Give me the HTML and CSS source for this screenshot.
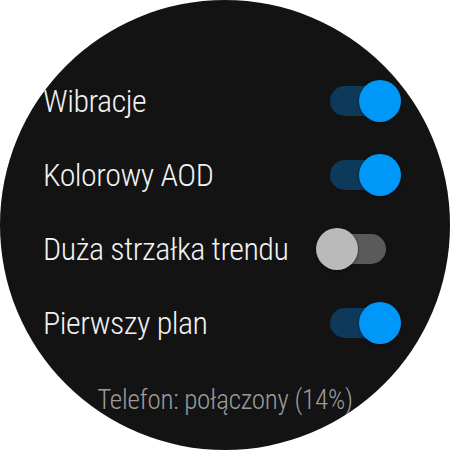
FILE: index.html
```html
<!DOCTYPE html>
<html>
<head>
<meta charset="utf-8">
<link rel="stylesheet" href="styles.css">
</head>
<body>
<div class="watch">
  <div class="list">
    <div class="row"><span class="label">Wibracje</span><span class="switch on"><span class="track"></span><span class="thumb"></span></span></div>
    <div class="row"><span class="label">Kolorowy AOD</span><span class="switch on"><span class="track"></span><span class="thumb"></span></span></div>
    <div class="row"><span class="label">Duża strzałka trendu</span><span class="switch off"><span class="track"></span><span class="thumb"></span></span></div>
    <div class="row"><span class="label">Pierwszy plan</span><span class="switch on"><span class="track"></span><span class="thumb"></span></span></div>
  </div>
  <div class="status">Telefon: połączony (14%)</div>
</div>
</body>
</html>
```
FILE: styles.css
```css
html, body { margin: 0; padding: 0; background: #ffffff; }
.watch {
  width: 450px; height: 450px; border-radius: 50%;
  background: #131313; overflow: hidden;
  display: flex; flex-direction: column;
  font-family: Roboto, "Noto Sans", sans-serif; font-weight: 300;
  font-stretch: 80%;
}
.list { padding-top: 64px; display: flex; flex-direction: column; }
.row {
  height: 74px; display: flex; align-items: center; justify-content: space-between;
  padding: 0 49px 0 43px;
}
.label { color: #f2f2f2; font-size: 32px; letter-spacing: -0.5px; }
.switch { position: relative; width: 85px; height: 42px; display: block; }
.track {
  position: absolute; left: 14px; top: 6px; width: 56px; height: 30px; border-radius: 15px;
}
.thumb {
  position: absolute; top: 0; width: 42px; height: 42px; border-radius: 50%;
  box-shadow: 0 1px 3px rgba(0,0,0,0.5);
}
.on .track { background: #0d3a5b; }
.on .thumb { right: 0; background: #0098f8; }
.off .track { background: #5a5a5a; }
.off .thumb { left: 0; background: #bababa; }
.status {
  margin-top: 24px; text-align: center; color: #9c9c9c; font-size: 27px; letter-spacing: -0.25px;
}
```
